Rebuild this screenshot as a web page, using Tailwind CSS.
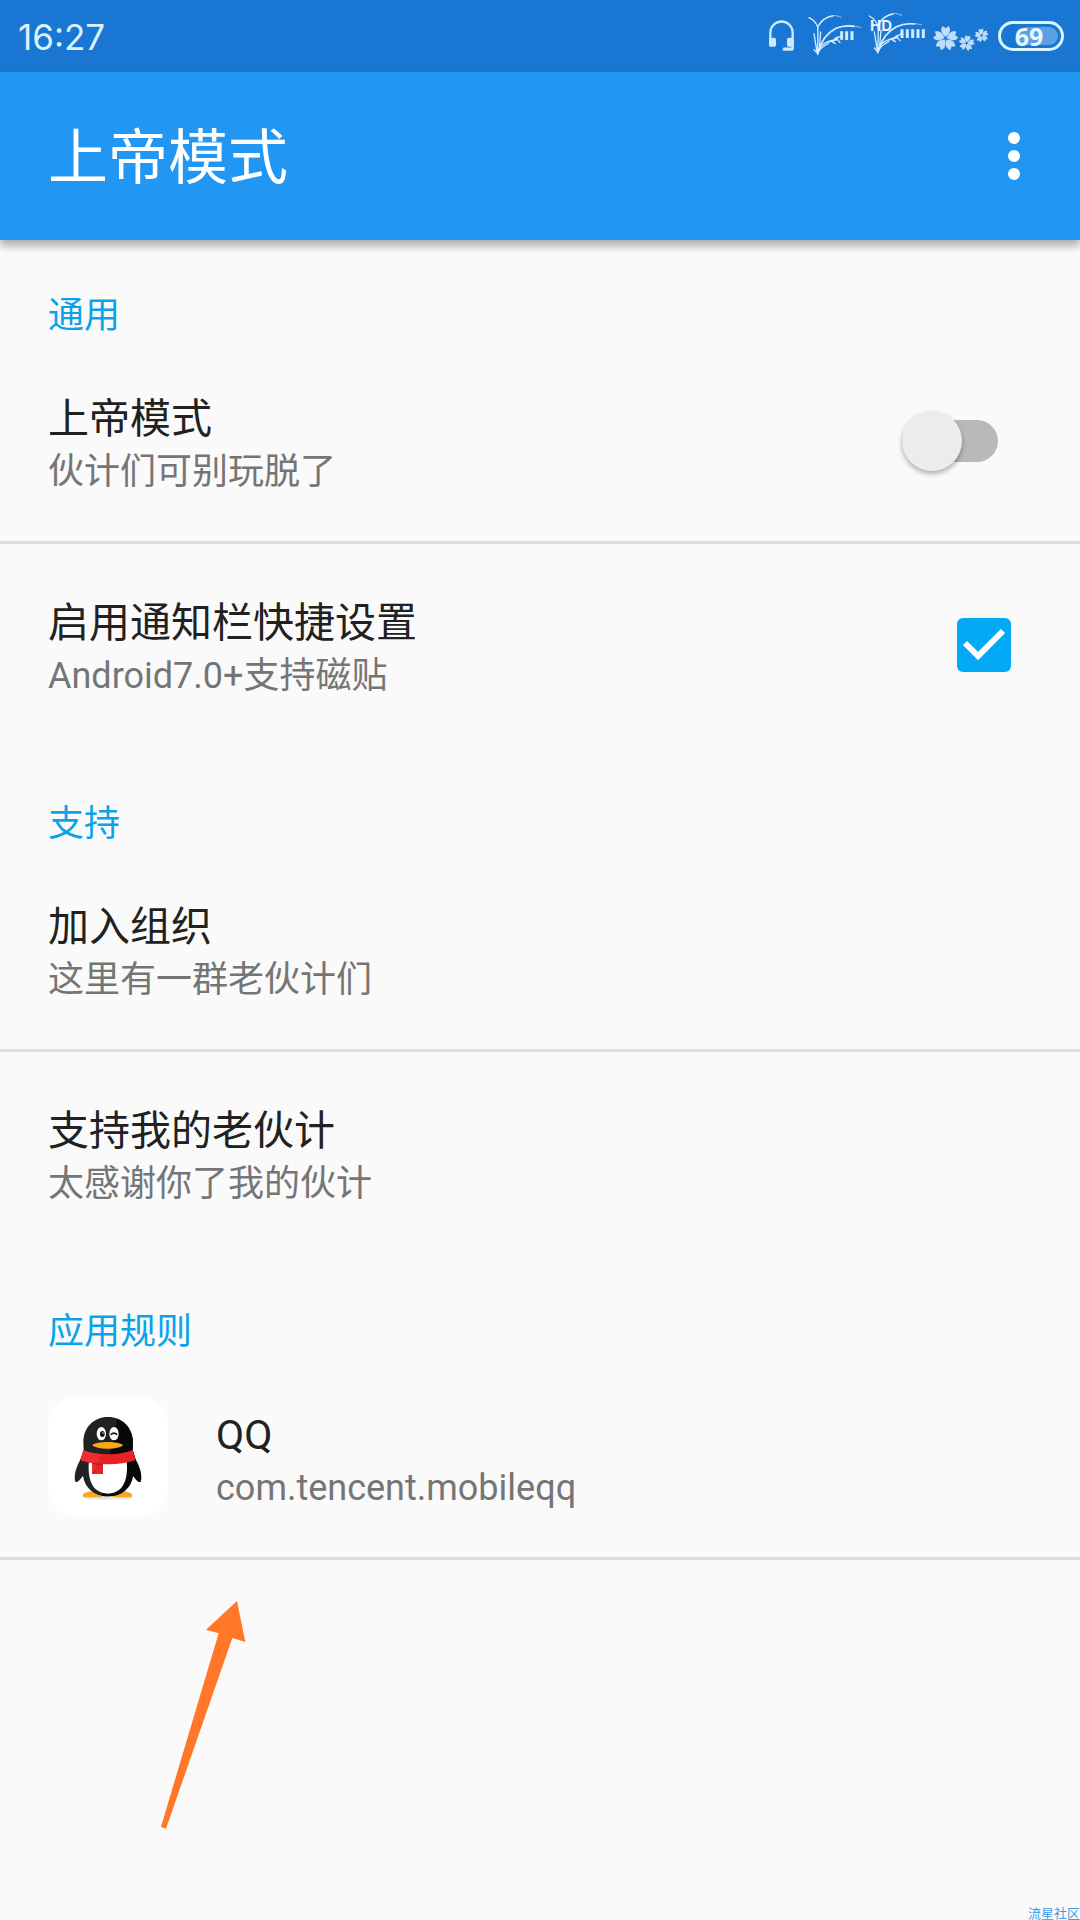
<!DOCTYPE html>
<html lang="zh-CN">
<head>
    <meta charset="UTF-8">
    <meta name="viewport" content="width=device-width, initial-scale=1.0">
    <title>上帝模式</title>
    <script src="https://cdn.jsdelivr.net/npm/@tailwindcss/browser@4"></script>
</head>
<body class="bg-[#fafafa] font-['Roboto','Noto_Sans_CJK_SC',sans-serif]">
<div class="relative min-h-screen overflow-hidden">
    <!-- status bar -->
    <div class="flex h-[72px] items-center justify-between bg-[#1976d2] pl-[18px] pr-4 text-[#dcf1ff]">
        <span class="pt-[2px] font-['Inter'] text-[35px] leading-[70px]">16:27</span>
        <div class="flex items-center">
            <svg class="mr-3 h-[72px] w-[28px]" viewBox="54 0 84 216" fill="none">
                <path d="M61 120V98a33 33 0 0 1 67 0v48h-28" stroke="#cfe8ff" stroke-width="7"/>
                <rect x="57" y="113" width="21" height="27" rx="5" fill="#cfe8ff"/>
                <rect x="111" y="113" width="21" height="27" rx="5" fill="#cfe8ff"/>
                <rect x="98" y="145" width="32" height="7" rx="3" fill="#cfe8ff"/>
            </svg>
            <svg class="mr-[6px] h-[72px] w-[54px]" viewBox="174 0 162 216" fill="none" stroke="#d6ecff" stroke-linecap="round">
                <path d="M202 160C203 130 205 104 203 82C199 68 188 58 177 53" stroke-width="4"/>
                <path d="M203 86C211 65 228 48 249 47C262 46 270 50 274 53" stroke-width="2"/>
                <path d="M204 78C214 62 228 51 248 48" stroke-width="4"/>
                <path d="M205 160C210 122 235 98 258 85C283 75 306 76 332 82" stroke-width="2"/>
                <path d="M207 150C215 120 236 97 258 85C278 77 294 76 312 79" stroke-width="5"/>
                <path d="M202 160C206 137 228 124 255 119L272 108M203 164C206 148 218 138 235 130M201 156L192 101M207 152L212 96M203 160L192 149M235 126L263 119L270 128M250 120L262 111M245 124L256 131" stroke-width="4"/>
                <path d="M275 94v25M290 94v26M306 94v26" stroke-width="9" stroke-linecap="butt"/>
            </svg>
            <svg class="mr-2 h-[72px] w-[57px]" viewBox="354 0 171 216" fill="none" stroke="#d6ecff" stroke-linecap="round">
                <path d="M382 155C384 130 386 104 384 80C380 65 369 54 358 48" stroke-width="4"/>
                <path d="M384 82C392 60 409 43 430 41C441 40 449 43 455 46" stroke-width="2"/>
                <path d="M385 74C395 57 409 45 429 42" stroke-width="4"/>
                <path d="M386 155C391 117 416 93 439 80C464 69 489 69 514 74" stroke-width="2"/>
                <path d="M388 145C396 115 417 92 439 80C460 71 477 70 494 72" stroke-width="5"/>
                <path d="M383 154C387 132 409 119 436 113L452 102M383 159C387 143 399 133 416 125M382 151L373 96M388 147L393 91M383 155L373 144M416 120L442 113L450 122M431 114L443 106M426 118L436 125" stroke-width="4"/>
                <path d="M456 88v26M472 88v26M488 88v26M504 88v26M520 88v26" stroke-width="9" stroke-linecap="butt"/>
                <text x="360" y="94" font-family="Inter" font-size="45" font-weight="700" fill="#e6f5ff" stroke="none">HD</text>
            </svg>
            <svg class="mr-2 h-[72px] w-[57px]" viewBox="549 0 171 216" fill="#bfdcfb">
                <defs>
                    <!-- five notched petals -->
                    <path id="petal" d="M0-4C-13-14-17-25-9-37L0-30L9-37C17-25 13-14 0-4Z"/>
                    <g id="blossom">
                        <use href="#petal"/>
                        <use href="#petal" transform="rotate(72)"/>
                        <use href="#petal" transform="rotate(144)"/>
                        <use href="#petal" transform="rotate(216)"/>
                        <use href="#petal" transform="rotate(288)"/>
                    </g>
                </defs>
                <use href="#blossom" transform="translate(587 115)"/>
                <use href="#blossom" transform="translate(650 129) rotate(10) scale(.64)"/>
                <use href="#blossom" transform="translate(695 106) rotate(-8) scale(.56)"/>
            </svg>
            <div class="relative flex h-[30px] w-[66px] items-center justify-center rounded-full border-[3px] border-[#dcf4ff]">
                <span class="absolute inset-y-[3px] left-[17px] right-[3px] rounded-full bg-[#5b9fe5]"></span>
                <span class="relative mr-1 font-['Open_Sans'] text-[25px] font-bold leading-[24px] text-[#e6f7ff]">69</span>
            </div>
        </div>
    </div>

    <header class="relative flex h-[168px] items-center justify-between bg-[#2196f3] pl-12 pr-[42px] shadow-[0_6px_8px_rgba(0,0,0,0.3)]">
        <h1 class="pt-[6px] text-[60px] leading-[80px] text-white">上帝模式</h1>
        <button type="button" aria-label="更多选项" class="flex w-12 cursor-pointer flex-col items-center gap-[6px]">
            <span class="size-3 rounded-full bg-white"></span>
            <span class="size-3 rounded-full bg-white"></span>
            <span class="size-3 rounded-full bg-white"></span>
        </button>
    </header>

    <main>
        <section>
            <h2 class="h-[100px] px-12 pt-[51px] text-[36px] leading-[50px] text-[#0aa3ea]">通用</h2>
            <div class="flex h-[204px] items-center justify-between border-b-[3px] border-[#dcdcdc] px-12">
                <label for="godMode" class="pt-[10px]">
                    <span class="block text-[41px] leading-[53px] text-[#212121]">上帝模式</span>
                    <span class="block text-[36px] leading-[52px] text-[#757575]">伙计们可别玩脱了</span>
                </label>
                <input type="checkbox" role="switch" id="godMode" class="relative mr-[34px] h-[60px] w-24 appearance-none before:absolute before:inset-x-0 before:top-[9px] before:h-[42px] before:rounded-full before:bg-[#b9b9b9] after:absolute after:left-0 after:top-0 after:size-[60px] after:rounded-full after:bg-[#ececec] after:shadow-[0_3px_5px_rgba(0,0,0,0.3)]">
            </div>
            <div class="flex h-[204px] items-center justify-between border-b-[3px] border-transparent px-12">
                <label for="quickTile" class="pt-[10px]">
                    <span class="block text-[41px] leading-[53px] text-[#212121]">启用通知栏快捷设置</span>
                    <span class="block text-[36px] leading-[52px] text-[#757575]">Android7.0+支持磁贴</span>
                </label>
                <div class="mr-[21px] grid size-[54px]">
                    <input type="checkbox" id="quickTile" checked class="peer col-start-1 row-start-1 size-[54px] appearance-none rounded-[6px] border-[6px] border-[#757575] checked:border-0 checked:bg-[#03a9f4]">
                    <svg class="pointer-events-none invisible col-start-1 row-start-1 size-[54px] peer-checked:visible" viewBox="0 0 54 54" fill="none">
                        <path d="M8 25L21 38L46 13" stroke="#fff" stroke-width="6"/>
                    </svg>
                </div>
            </div>
        </section>

        <section>
            <h2 class="h-[100px] px-12 pt-[51px] text-[36px] leading-[50px] text-[#0aa3ea]">支持</h2>
            <a href="#" class="flex h-[204px] items-center border-b-[3px] border-[#dcdcdc] px-12">
                <span class="pt-[10px]">
                    <span class="block text-[41px] leading-[53px] text-[#212121]">加入组织</span>
                    <span class="block text-[36px] leading-[52px] text-[#757575]">这里有一群老伙计们</span>
                </span>
            </a>
            <a href="#" class="flex h-[204px] items-center border-b-[3px] border-transparent px-12">
                <span class="pt-[10px]">
                    <span class="block text-[41px] leading-[53px] text-[#212121]">支持我的老伙计</span>
                    <span class="block text-[36px] leading-[52px] text-[#757575]">太感谢你了我的伙计</span>
                </span>
            </a>
        </section>

        <section>
            <h2 class="h-[100px] px-12 pt-[51px] text-[36px] leading-[50px] text-[#0aa3ea]">应用规则</h2>
            <a href="#" class="flex h-[204px] items-center gap-12 border-b-[3px] border-[#dcdcdc] px-12">
                <svg class="size-[120px]" viewBox="54 48 360 360">
                    <rect x="54" y="48" width="360" height="360" rx="84" fill="#fff"/>
                    <ellipse cx="234" cy="349" rx="72" ry="7" fill="#e4e4e4"/>
                    <path d="M158 344c0-8 15-13 33-13s31 5 31 11s-10 7-31 7s-33 1-33-5zM307 344c0-8-15-13-33-13s-31 5-31 11s10 7 31 7s33 1 33-5z" fill="#f7a81b"/>
                    <path d="M234 108C190 108 160 140 160 184L161 208L150 238C138 260 132 282 135 299C137 307 145 304 159 284C164 322 194 346 234 346C274 346 304 322 309 284C323 304 331 307 333 299C336 282 330 260 318 238L308 208L309 184C308 140 278 108 234 108Z" fill="#222"/>
                    <path d="M262 113C291 124 309 152 309 184L308 208L318 238C330 260 336 282 333 299C331 307 323 304 309 284C304 322 274 346 234 346C228 346 222 345 215 344Z" fill="#080808"/>
                    <path d="M177 240C172 290 183 336 234 338C283 336 295 290 290 240Z" fill="#fff"/>
                    <path d="M160 208C200 224 268 224 308 207L317 237C285 248 250 251 219 249V279H186V246C174 244 161 241 151 237Z" fill="#e82127"/>
                    <path d="M160 208C176 214 196 218 215 219L186 279V246C174 244 161 241 151 237Z" fill="#f23a3d" opacity=".5"/>
                    <path d="M186 246L219 249V253L188 249Z" fill="#b5151a"/>
                    <ellipse cx="214" cy="158" rx="14" ry="20" fill="#fff"/>
                    <ellipse cx="252" cy="158" rx="14" ry="20" fill="#fff"/>
                    <ellipse cx="217" cy="159" rx="7" ry="9" fill="#111"/>
                    <circle cx="219" cy="156" r="2" fill="#fff"/>
                    <path d="M244 160C248 155 256 155 260 160" fill="none" stroke="#111" stroke-width="5" stroke-linecap="round"/>
                    <path d="M187 192C200 180 266 180 279 192C268 207 198 207 187 192Z" fill="#f7a81b"/>
                </svg>
                <span class="pt-[10px]">
                    <span class="block text-[41px] leading-[53px] text-[#212121]">QQ</span>
                    <span class="block text-[36px] leading-[52px] text-[#757575]">com.tencent.mobileqq</span>
                </span>
            </a>
        </section>

        <svg class="ml-[160px] mt-10 h-[230px] w-[88px]" viewBox="60 60 264 690" fill="#ff7727">
            <path d="M291 63L316 186L277 174L78 746L63 740L236 160L198 149Z"/>
        </svg>
    </main>

    <span class="absolute bottom-0 right-0 text-[13px] leading-3 text-[#3d9be9]">流星社区</span>
</div>
</body>
</html>
